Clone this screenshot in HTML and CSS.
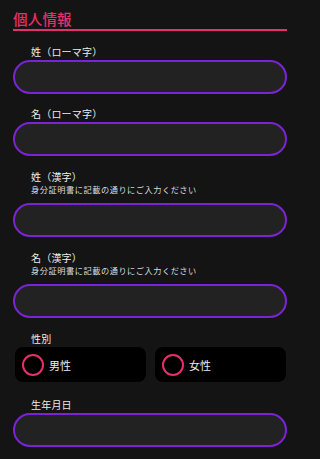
FILE: index.html
```html
<!DOCTYPE html>
<html lang="ja">
<head>
<meta charset="utf-8">
<meta name="viewport" content="width=300">
<link rel="stylesheet" href="styles.css">
</head>
<body>
<div class="page">
  <h1 class="section-title">個人情報</h1>

  <div class="field field-first">
    <div class="label">姓（ローマ字）</div>
    <div class="input"></div>
  </div>

  <div class="field field-tight">
    <div class="label">名（ローマ字）</div>
    <div class="input"></div>
  </div>

  <div class="field">
    <div class="label">姓（漢字）</div>
    <div class="hint">身分証明書に記載の通りにご入力ください</div>
    <div class="input input-after-hint"></div>
  </div>

  <div class="field">
    <div class="label">名（漢字）</div>
    <div class="hint">身分証明書に記載の通りにご入力ください</div>
    <div class="input input-after-hint"></div>
  </div>

  <div class="field">
    <div class="label">性別</div>
    <div class="radio-row">
      <div class="radio-box"><span class="radio-circle"></span><span class="radio-text">男性</span></div>
      <div class="radio-box"><span class="radio-circle"></span><span class="radio-text">女性</span></div>
    </div>
  </div>

  <div class="field field-loose">
    <div class="label">生年月日</div>
    <div class="input"></div>
  </div>
</div>
</body>
</html>
```

FILE: styles.css
```css
html, body {
  margin: 0;
  padding: 0;
  background: #141414;
}

body {
  font-family: "Noto Sans CJK JP", "Noto Sans", sans-serif;
  color: #e8e8e8;
}

.page {
  box-sizing: border-box;
  width: 300px;
  padding: 10px 13px 0 13px;
}

.section-title {
  margin: 0;
  font-size: 14.5px;
  font-weight: 500;
  line-height: 18px;
  color: #e4306c;
  padding-bottom: 1px;
  border-bottom: 2px solid #e4306c;
  letter-spacing: 0.2px;
}

.field {
  margin-top: 15px;
}

.field-first {
  margin-top: 15px;
}

.field-tight {
  margin-top: 14px;
}

.field-loose {
  margin-top: 17px;
}

.label {
  padding-left: 18px;
  font-size: 10px;
  line-height: 12px;
  letter-spacing: 0.2px;
  color: #ececec;
  margin-bottom: 2px;
}

.hint {
  padding-left: 18px;
  font-size: 8.2px;
  line-height: 10px;
  letter-spacing: 0.55px;
  color: #dcdcdc;
  margin-top: -1px;
}

.input {
  box-sizing: border-box;
  height: 34px;
  border: 2px solid #7b24d6;
  border-radius: 17px;
  background: #222222;
}

.input-after-hint {
  margin-top: 9px;
}

.radio-row {
  display: flex;
  gap: 9px;
  padding: 0 1px 0 2px;
}

.radio-box {
  flex: 1;
  box-sizing: border-box;
  height: 35px;
  background: #000000;
  border-radius: 8px;
  display: flex;
  align-items: center;
  padding-left: 7px;
}

.radio-circle {
  box-sizing: border-box;
  width: 22px;
  height: 22px;
  border: 2px solid #e4306c;
  border-radius: 50%;
  flex: none;
}

.radio-text {
  margin-left: 5px;
  font-size: 11px;
  color: #ececec;
}
```
